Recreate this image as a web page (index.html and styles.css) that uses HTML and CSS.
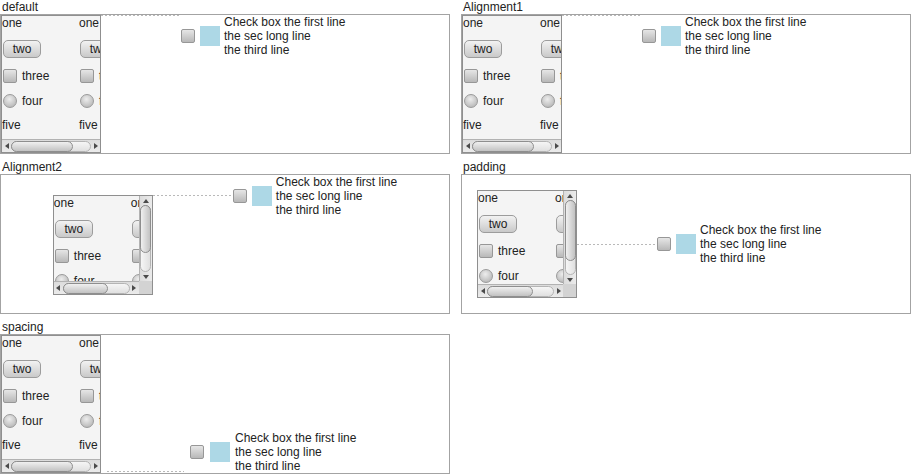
FILE: index.html
```html
<!DOCTYPE html>
<html>
<head>
<meta charset="utf-8">
<link rel="stylesheet" href="styles.css">
</head>
<body>
<div class="page">

  <section class="cell">
    <div class="title">default</div>
    <div class="box">
      <div class="sp">
        <div class="vp">
          <div class="cols">
            <div class="col">
              <div class="lbl">one</div>
              <div class="btn">two</div>
              <div class="opt"><span class="chk"></span><span>three</span></div>
              <div class="opt"><span class="radio"></span><span>four</span></div>
              <div class="lbl">five</div>
            </div>
            <div class="col">
              <div class="lbl">one</div>
              <div class="btn">two</div>
              <div class="opt"><span class="chk"></span><span>three</span></div>
              <div class="opt"><span class="radio"></span><span>four</span></div>
              <div class="lbl">five</div>
            </div>
          </div>
        </div>
        <div class="hbar"><span class="arr arr-l"></span><div class="track"><div class="thumb th-80"></div></div><span class="arr arr-r"></span></div>
      </div>
      <div class="spacer"></div>
      <div class="group">
        <span class="chk"></span>
        <span class="swatch"></span>
        <div class="txt">Check box the first line<br>the sec long line<br>the third line</div>
      </div>
    </div>
  </section>

  <section class="cell">
    <div class="title">Alignment1</div>
    <div class="box">
      <div class="sp">
        <div class="vp">
          <div class="cols">
            <div class="col">
              <div class="lbl">one</div>
              <div class="btn">two</div>
              <div class="opt"><span class="chk"></span><span>three</span></div>
              <div class="opt"><span class="radio"></span><span>four</span></div>
              <div class="lbl">five</div>
            </div>
            <div class="col">
              <div class="lbl">one</div>
              <div class="btn">two</div>
              <div class="opt"><span class="chk"></span><span>three</span></div>
              <div class="opt"><span class="radio"></span><span>four</span></div>
              <div class="lbl">five</div>
            </div>
          </div>
        </div>
        <div class="hbar"><span class="arr arr-l"></span><div class="track"><div class="thumb th-80"></div></div><span class="arr arr-r"></span></div>
      </div>
      <div class="spacer"></div>
      <div class="group">
        <span class="chk"></span>
        <span class="swatch"></span>
        <div class="txt">Check box the first line<br>the sec long line<br>the third line</div>
      </div>
    </div>
  </section>

  <section class="cell">
    <div class="title">Alignment2</div>
    <div class="box box-center">
      <div class="sp sp-hv sp-fixed">
        <div class="vp">
          <div class="cols">
            <div class="col">
              <div class="lbl">one</div>
              <div class="btn">two</div>
              <div class="opt"><span class="chk"></span><span>three</span></div>
              <div class="opt"><span class="radio"></span><span>four</span></div>
              <div class="lbl">five</div>
            </div>
            <div class="col">
              <div class="lbl">one</div>
              <div class="btn">two</div>
              <div class="opt"><span class="chk"></span><span>three</span></div>
              <div class="opt"><span class="radio"></span><span>four</span></div>
              <div class="lbl">five</div>
            </div>
          </div>
        </div>
        <div class="vbar"><span class="arr arr-u"></span><div class="track"><div class="thumb tv-74"></div></div><span class="arr arr-d"></span></div>
        <div class="hbar"><span class="arr arr-l"></span><div class="track"><div class="thumb th-70"></div></div><span class="arr arr-r"></span></div>
        <div class="corner"></div>
      </div>
      <div class="spacer spacer-top20"></div>
      <div class="group">
        <span class="chk"></span>
        <span class="swatch"></span>
        <div class="txt">Check box the first line<br>the sec long line<br>the third line</div>
      </div>
    </div>
  </section>

  <section class="cell">
    <div class="title">padding</div>
    <div class="box box-pad">
      <div class="sp sp-hv">
        <div class="vp">
          <div class="cols">
            <div class="col">
              <div class="lbl">one</div>
              <div class="btn">two</div>
              <div class="opt"><span class="chk"></span><span>three</span></div>
              <div class="opt"><span class="radio"></span><span>four</span></div>
              <div class="lbl">five</div>
            </div>
            <div class="col">
              <div class="lbl">one</div>
              <div class="btn">two</div>
              <div class="opt"><span class="chk"></span><span>three</span></div>
              <div class="opt"><span class="radio"></span><span>four</span></div>
              <div class="lbl">five</div>
            </div>
          </div>
        </div>
        <div class="vbar"><span class="arr arr-u"></span><div class="track"><div class="thumb tv-83"></div></div><span class="arr arr-d"></span></div>
        <div class="hbar"><span class="arr arr-l"></span><div class="track"><div class="thumb th-70"></div></div><span class="arr arr-r"></span></div>
        <div class="corner"></div>
      </div>
      <div class="spacer spacer-mid"></div>
      <div class="group">
        <span class="chk"></span>
        <span class="swatch"></span>
        <div class="txt">Check box the first line<br>the sec long line<br>the third line</div>
      </div>
    </div>
  </section>

  <section class="cell">
    <div class="title">spacing</div>
    <div class="box box-spacing">
      <div class="sp">
        <div class="vp">
          <div class="cols">
            <div class="col">
              <div class="lbl">one</div>
              <div class="btn">two</div>
              <div class="opt"><span class="chk"></span><span>three</span></div>
              <div class="opt"><span class="radio"></span><span>four</span></div>
              <div class="lbl">five</div>
            </div>
            <div class="col">
              <div class="lbl">one</div>
              <div class="btn">two</div>
              <div class="opt"><span class="chk"></span><span>three</span></div>
              <div class="opt"><span class="radio"></span><span>four</span></div>
              <div class="lbl">five</div>
            </div>
          </div>
        </div>
        <div class="hbar"><span class="arr arr-l"></span><div class="track"><div class="thumb th-80"></div></div><span class="arr arr-r"></span></div>
      </div>
      <div class="spacer"></div>
      <div class="group">
        <span class="chk"></span>
        <span class="swatch"></span>
        <div class="txt">Check box the first line<br>the sec long line<br>the third line</div>
      </div>
    </div>
  </section>

</div>
</body>
</html>
```

FILE: styles.css
```css
* { box-sizing: border-box; }
html, body { margin: 0; padding: 0; background: #fff; }
body {
  font-family: "Liberation Sans", Arial, sans-serif;
  font-size: 12px;
  line-height: 14px;
  color: #222;
}
.page {
  display: grid;
  grid-template-columns: 450px 450px;
  column-gap: 11px;
  row-gap: 6px;
}
.cell { display: flex; flex-direction: column; }
.title { height: 14px; padding-left: 2px; white-space: nowrap; }
.box {
  height: 140px;
  border: 1px solid #a3a3a3;
  display: flex;
  align-items: flex-start;
}
.box-center { justify-content: center; }
.box-pad { padding: 15px; align-items: center; }
.box-spacing { align-items: flex-end; }

/* scroll pane */
.sp {
  width: 100px;
  flex: none;
  align-self: stretch;
  border: 1px solid #8f8f8f;
  background: #f4f4f4;
  display: grid;
  grid-template-columns: minmax(0, 1fr);
  grid-template-rows: minmax(0, 1fr) 13px;
  overflow: hidden;
}
.sp-hv { grid-template-columns: minmax(0, 1fr) 13px; }
.sp-fixed { align-self: flex-start; height: 100px; margin-top: 20px; }
.vp { grid-column: 1; grid-row: 1; overflow: hidden; min-width: 0; min-height: 0; }
.cols { display: grid; grid-template-columns: 77px 77px; }
.col { display: flex; flex-direction: column; gap: 10px; }
.lbl { height: 14px; white-space: nowrap; }
.btn {
  margin-left: 1px;
  width: 38px;
  height: 18px;
  border: 1px solid #9c9c9c;
  border-radius: 5px;
  background: linear-gradient(#f2f2f2, #c9c9c9);
  text-align: center;
  line-height: 16px;
  white-space: nowrap;
}
.opt {
  margin-left: 1px;
  height: 15px;
  display: flex;
  align-items: center;
  gap: 5px;
  white-space: nowrap;
}
.chk {
  flex: none;
  width: 14px;
  height: 14px;
  border: 1px solid #979797;
  border-radius: 2px;
  background: linear-gradient(#e6e6e6, #b8b8b8);
}
.radio {
  flex: none;
  width: 14px;
  height: 14px;
  border: 1px solid #9a9a9a;
  border-radius: 50%;
  background: radial-gradient(circle at 45% 35%, #ededed, #bcbcbc 75%);
}

/* scroll bars */
.hbar {
  grid-column: 1;
  grid-row: 2;
  display: flex;
  align-items: center;
  border-top: 1px solid #b2b2b2;
  background: linear-gradient(#dcdcdc, #ebebeb);
  min-width: 0;
}
.vbar {
  grid-column: 2;
  grid-row: 1;
  display: flex;
  flex-direction: column;
  align-items: center;
  border-left: 1px solid #b2b2b2;
  background: linear-gradient(to right, #dcdcdc, #ebebeb);
  min-height: 0;
}
.corner { grid-column: 2; grid-row: 2; background: #d3d3d3; }
.arr {
  flex: none;
  width: 9px;
  height: 100%;
  display: flex;
  align-items: center;
  justify-content: center;
}
.vbar .arr { width: 100%; height: 9px; }
.arr::before { content: ""; border-style: solid; border-color: transparent; }
.arr-l::before { border-width: 3px 4px 3px 0; border-right-color: #4a4a4a; }
.arr-r::before { border-width: 3px 0 3px 4px; border-left-color: #4a4a4a; }
.arr-u::before { border-width: 0 3px 4px 3px; border-bottom-color: #4a4a4a; }
.arr-d::before { border-width: 4px 3px 0 3px; border-top-color: #4a4a4a; }
.track {
  flex: 1;
  min-width: 0;
  height: 11px;
  border: 1px solid #b4b4b4;
  border-radius: 6px;
  background: linear-gradient(#f6f6f6, #e0e0e0);
  display: flex;
}
.vbar .track {
  width: 11px;
  height: auto;
  min-height: 0;
  flex-direction: column;
  background: linear-gradient(to right, #f6f6f6, #e0e0e0);
}
.thumb {
  flex: none;
  height: calc(100% + 2px);
  margin: -1px 0 -1px -1px;
  border: 1px solid #8e8e8e;
  border-radius: 6px;
  background: linear-gradient(#f0f0f0, #c2c2c2);
}
.vbar .thumb {
  width: calc(100% + 2px);
  margin: -1px -1px 0 -1px;
  background: linear-gradient(to right, #f0f0f0, #c2c2c2);
}
.th-80 { width: 80%; }
.th-70 { width: 70%; }
.tv-74 { height: 74%; }
.tv-83 { height: 83%; }

/* right-hand group */
.spacer {
  flex: none;
  width: 80px;
  height: 1px;
  background: repeating-linear-gradient(to right, #b9b9b9 0 2px, transparent 2px 4px);
}
.spacer-mid { align-self: center; }
.spacer-top20 { margin-top: 20px; }
.group { flex: none; display: flex; align-items: center; }
.group .chk { margin-right: 5px; }
.swatch { flex: none; width: 20px; height: 20px; background: #add8e6; margin-right: 4px; }
.txt { white-space: nowrap; }
.box-spacing .spacer { width: 77px; margin: 0 0 1px 6px; }
.box-spacing .group { margin-left: 6px; }
.box-spacing .group .chk { margin-right: 6px; }
.box-spacing .swatch { margin-right: 5px; }
```
